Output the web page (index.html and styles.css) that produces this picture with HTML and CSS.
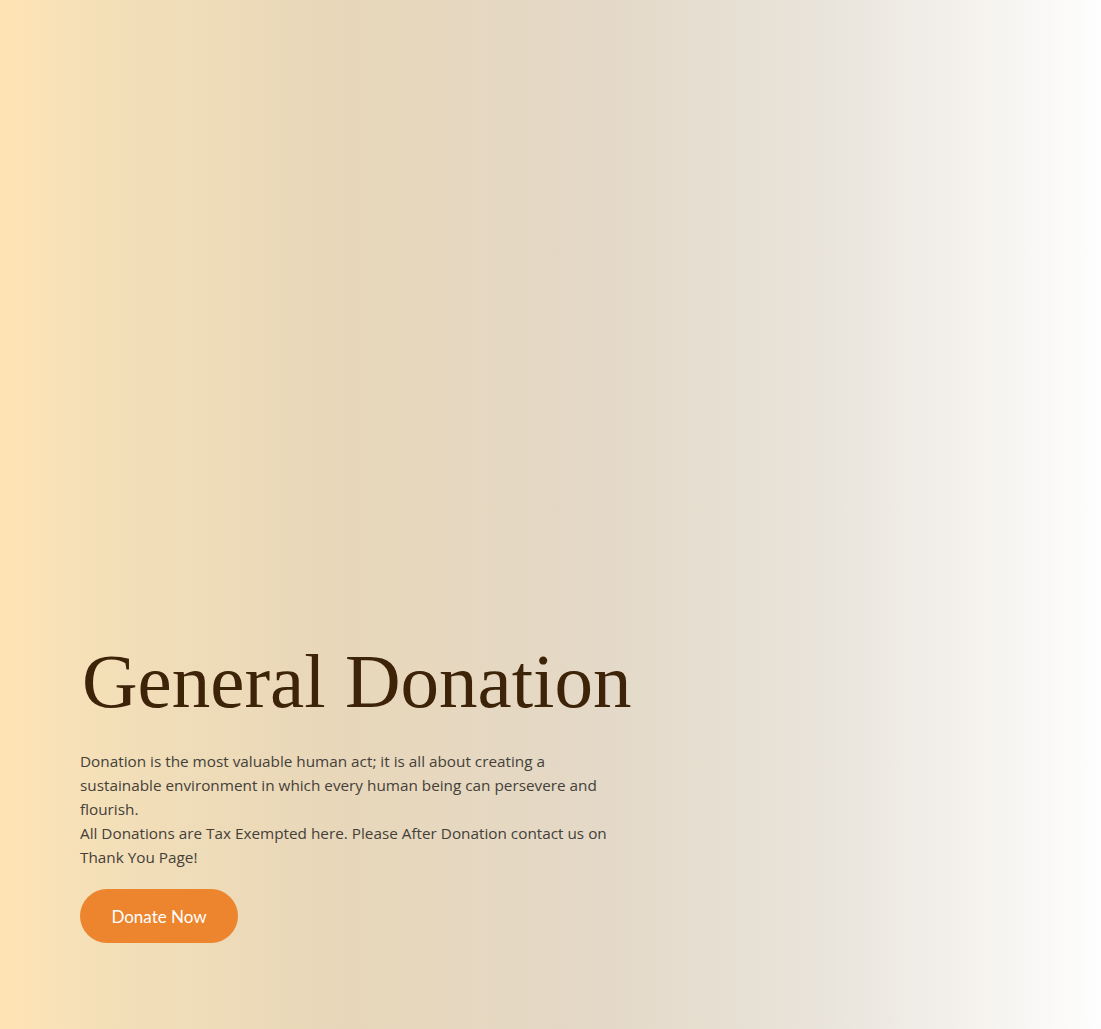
FILE: index.html
```html
<!DOCTYPE html>
<html lang="en">
<head>
<meta charset="utf-8">
<title>General Donation</title>
<link rel="stylesheet" href="styles.css">
</head>
<body>
<section class="hero">
  <div class="hero-content">
    <h1 class="hero-title">General Donation</h1>
    <p class="hero-text">Donation is the most valuable human act; it is all about creating a sustainable environment in which every human being can persevere and flourish.<br>All Donations are Tax Exempted here. Please After Donation contact us on Thank You Page!</p>
    <a class="btn-donate" href="#">Donate Now</a>
  </div>
</section>
</body>
</html>
```
FILE: styles.css
```css
html, body {
  margin: 0;
  padding: 0;
}
body {
  font-family: "Open Sans", "Noto Sans", sans-serif;
}
.hero {
  min-height: 1029px;
  box-sizing: border-box;
  display: flex;
  flex-direction: column;
  justify-content: flex-end;
  padding: 0 0 86px 80px;
  background: linear-gradient(90deg, #ffe4b5 0%, #f3dfb8 10%, #e8d7b9 30%, #e4d9c8 55%, #e9e4db 75%, #f4f1ed 88%, #fefefe 100%);
}
.hero-content {
  width: 545px;
}
.hero-title {
  margin: 0 0 29px 2px;
  font-family: "Liberation Serif", "Times New Roman", serif;
  font-weight: 400;
  font-size: 77px;
  line-height: 1;
  color: #3d2308;
  white-space: nowrap;
}
.hero-text {
  margin: 0 0 20px;
  font-family: "Open Sans", sans-serif;
  font-size: 15.3px;
  line-height: 24px;
  color: #444039;
}
.btn-donate {
  display: inline-flex;
  align-items: center;
  justify-content: center;
  width: 158px;
  height: 54px;
  border-radius: 27px;
  background: #ec852e;
  color: #ffffff;
  text-decoration: none;
  font-family: "Lato", sans-serif;
  font-size: 17px;
}
```
